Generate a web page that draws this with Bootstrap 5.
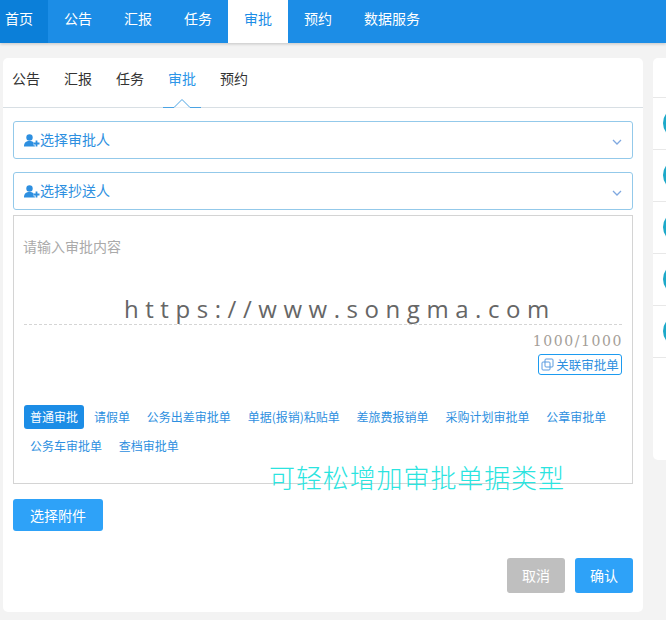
<!DOCTYPE html>
<html lang="zh-CN">
<head>
  <meta charset="UTF-8">
  <meta name="viewport" content="width=device-width, initial-scale=1.0">
  <title>审批</title>
  <link href="https://cdn.jsdelivr.net/npm/bootstrap@5.3.0/dist/css/bootstrap.min.css" rel="stylesheet">
  <style>
    html, body { height: 620px; overflow: hidden; }
    body {
      background: #f3f3f3;
      font-family: "Noto Sans CJK SC", "Liberation Sans", sans-serif;
      font-size: 14px;
      color: #333;
      position: relative;
    }
    .top-bar {
      height: 43px;
      background: #1c8de6;
      box-shadow: 0 1px 3px rgba(0, 0, 0, .2);
    }
    .top-link {
      display: block;
      width: 60px;
      line-height: 36px;
      height: 43px;
      text-align: center;
      color: #fff;
      text-decoration: none;
    }
    .top-link.home { width: 48px; background: #0b7fd9; padding-right: 10px; }
    .top-link.on { background: #fff; color: #1c8de6; }
    .top-link.wide { width: 88px; }
    .page-row { padding: 15px 0 0 3px; gap: 10px; }
    .main-panel {
      width: 640px;
      height: 554px;
      flex: none;
      background: #fff;
      border-radius: 5px;
      padding: 0 10px;
    }
    .side-panel {
      width: 40px;
      height: 402px;
      flex: none;
      background: #fff;
      border-radius: 5px 0 0 5px;
      padding-top: 39px;
    }
    .side-item {
      height: 52px;
      border-top: 1px solid #e8e8e8;
      padding: 9px 0 0 10px;
    }
    .side-dot {
      width: 32px;
      height: 32px;
      border-radius: 50%;
      background: #1da9c9;
    }
    .sub-tabs {
      height: 50px;
      margin: 0 -10px;
      border-bottom: 1px solid #d8dfe4;
      padding-left: 9px;
      gap: 24px;
      position: relative;
    }
    .sub-tab { line-height: 41px; width: 28px; white-space: nowrap; color: #333; text-decoration: none; }
    .sub-tab.on { color: #2d96e8; }
    .tab-caret { position: absolute; left: 160px; bottom: -1px; }
    .pick-box {
      height: 38px;
      border: 1px solid #93c9ea;
      border-radius: 3px;
      color: #2d8fe0;
      padding: 0 10px;
    }
    .pick-first { margin-top: 13px; }
    .pick-next { margin-top: 13px; }
    .pick-arrow { margin-top: 4px; }
    .pick-text { margin-top: -2px; }
    .editor-box {
      height: 269px;
      margin-top: 5px;
      border: 1px solid #d4d4d4;
      padding: 0 10px;
    }
    .hint-line { margin: 20px 0 0 -1px; height: 63px; color: #aaa; line-height: 20px; }
    .dash-line { height: 1px; border-top: 1px dashed #d5d5d5; margin-top: 25px; }
    .count-line {
      font-family: "DejaVu Serif", serif;
      font-size: 14px;
      letter-spacing: 1.6px;
      color: #a49e98;
      text-align: right;
      line-height: 18px;
      margin-top: 7px;
      margin-right: -1px;
    }
    .link-chip {
      font-size: 12.5px;
      line-height: 18px;
      height: 21px;
      width: 84px;
      border: 1px solid #1c9bf0;
      border-radius: 3px;
      color: #2d8fe0;
      margin-top: 4px;
      gap: 2px;
    }
    .type-list { margin-top: 30px; row-gap: 5px; font-size: 12px; color: #2d8fe0; }
    .type-item { height: 24px; line-height: 24px; padding: 0 6px; margin-right: 4.8px; white-space: nowrap; }
    .type-item.on { background: #1c8de6; color: #fff; border-radius: 3px; margin-right: 4px; }
    .file-btn {
      width: 90px;
      height: 32px;
      margin-top: 15px;
      background: #2ea2f8;
      color: #fff;
      border: 0;
      border-radius: 3px;
      font-size: 14px;
      padding: 0;
    }
    .foot-btns { margin-top: 27px; gap: 10px; }
    .foot-btn {
      width: 58px;
      height: 35px;
      border: 0;
      border-radius: 3px;
      color: #fff;
      font-size: 14px;
      padding: 0;
    }
    .foot-btn.off { background: #bfbfbf; }
    .foot-btn.ok { background: #2ea2f8; }
    .wm-url {
      position: absolute;
      left: 124px;
      top: 293px;
      font-family: "Open Sans", "Liberation Sans", sans-serif;
      font-size: 24px;
      line-height: 32px;
      letter-spacing: 6.55px;
      color: #666;
      white-space: nowrap;
    }
    .wm-note {
      position: absolute;
      left: 269px;
      top: 459px;
      font-size: 26px;
      line-height: 36px;
      font-weight: 300;
      letter-spacing: .9px;
      color: #2be4df;
      white-space: nowrap;
    }
  </style>
</head>
<body>
<nav class="top-bar d-flex">
  <a class="top-link home" href="#">首页</a>
  <a class="top-link" href="#">公告</a>
  <a class="top-link" href="#">汇报</a>
  <a class="top-link" href="#">任务</a>
  <a class="top-link on" href="#">审批</a>
  <a class="top-link" href="#">预约</a>
  <a class="top-link wide" href="#">数据服务</a>
</nav>

<div class="page-row d-flex">
  <div class="main-panel">
    <div class="sub-tabs d-flex">
      <a class="sub-tab" href="#">公告</a>
      <a class="sub-tab" href="#">汇报</a>
      <a class="sub-tab" href="#">任务</a>
      <a class="sub-tab on" href="#">审批</a>
      <a class="sub-tab" href="#">预约</a>
      <svg class="tab-caret" width="38" height="10" viewBox="0 0 38 10"><path d="M0 9.5H11L19 1.5L27 9.5H38" fill="#fff" stroke="#4ba3e3" stroke-width="1"/></svg>
    </div>

    <div class="pick-box pick-first d-flex align-items-center justify-content-between">
      <span class="d-flex align-items-center">
        <svg width="16" height="13" viewBox="0 0 16 13"><circle cx="5.500" cy="3.500" r="3.200" fill="#2d8fe0"/><path d="M0 12.500C0 8.500 2 7 5.500 7S11 8.500 11 12.500Z" fill="#2d8fe0"/><path d="M9.500 9.500H15.500M12.500 6.500V12.500" stroke="#fff" stroke-width="3.400"/><path d="M9.500 9.500H15.500M12.500 6.500V12.500" stroke="#2d8fe0" stroke-width="1.800"/></svg>
        <span class="pick-text">选择审批人</span>
      </span>
      <svg class="pick-arrow" width="10" height="6" viewBox="0 0 10 6"><path d="M1 1L5 5L9 1" fill="none" stroke="#7fa8e0" stroke-width="1.300"/></svg>
    </div>

    <div class="pick-box pick-next d-flex align-items-center justify-content-between">
      <span class="d-flex align-items-center">
        <svg width="16" height="13" viewBox="0 0 16 13"><circle cx="5.500" cy="3.500" r="3.200" fill="#2d8fe0"/><path d="M0 12.500C0 8.500 2 7 5.500 7S11 8.500 11 12.500Z" fill="#2d8fe0"/><path d="M9.500 9.500H15.500M12.500 6.500V12.500" stroke="#fff" stroke-width="3.400"/><path d="M9.500 9.500H15.500M12.500 6.500V12.500" stroke="#2d8fe0" stroke-width="1.800"/></svg>
        <span class="pick-text">选择抄送人</span>
      </span>
      <svg class="pick-arrow" width="10" height="6" viewBox="0 0 10 6"><path d="M1 1L5 5L9 1" fill="none" stroke="#7fa8e0" stroke-width="1.300"/></svg>
    </div>

    <div class="editor-box">
      <div class="hint-line">请输入审批内容</div>
      <div class="dash-line"></div>
      <div class="count-line">1000/1000</div>
      <div class="d-flex justify-content-end">
        <div class="link-chip d-flex align-items-center justify-content-center">
          <svg width="13" height="13" viewBox="0 0 13 13"><rect x="4" y="1" width="8" height="8" rx="1" fill="none" stroke="#5b9be0"/><rect x="1" y="4" width="8" height="8" rx="1" fill="none" stroke="#5b9be0"/></svg>
          <span>关联审批单</span>
        </div>
      </div>
      <div class="type-list d-flex flex-wrap">
        <span class="type-item on">普通审批</span>
        <span class="type-item">请假单</span>
        <span class="type-item">公务出差审批单</span>
        <span class="type-item">单据(报销)粘贴单</span>
        <span class="type-item">差旅费报销单</span>
        <span class="type-item">采购计划审批单</span>
        <span class="type-item">公章审批单</span>
        <span class="type-item">公务车审批单</span>
        <span class="type-item">查档审批单</span>
      </div>
    </div>

    <button class="file-btn d-block" type="button">选择附件</button>

    <div class="foot-btns d-flex justify-content-end">
      <button class="foot-btn off" type="button">取消</button>
      <button class="foot-btn ok" type="button">确认</button>
    </div>
  </div>

  <div class="side-panel">
    <div class="side-item"><div class="side-dot"></div></div>
    <div class="side-item"><div class="side-dot"></div></div>
    <div class="side-item"><div class="side-dot"></div></div>
    <div class="side-item"><div class="side-dot"></div></div>
    <div class="side-item"><div class="side-dot"></div></div>
    <div class="side-item"></div>
  </div>
</div>

<div class="wm-url">https://www.songma.com</div>
<div class="wm-note">可轻松增加审批单据类型</div>
<script src="https://cdn.jsdelivr.net/npm/bootstrap@5.3.0/dist/js/bootstrap.bundle.min.js"></script>
</body>
</html>
